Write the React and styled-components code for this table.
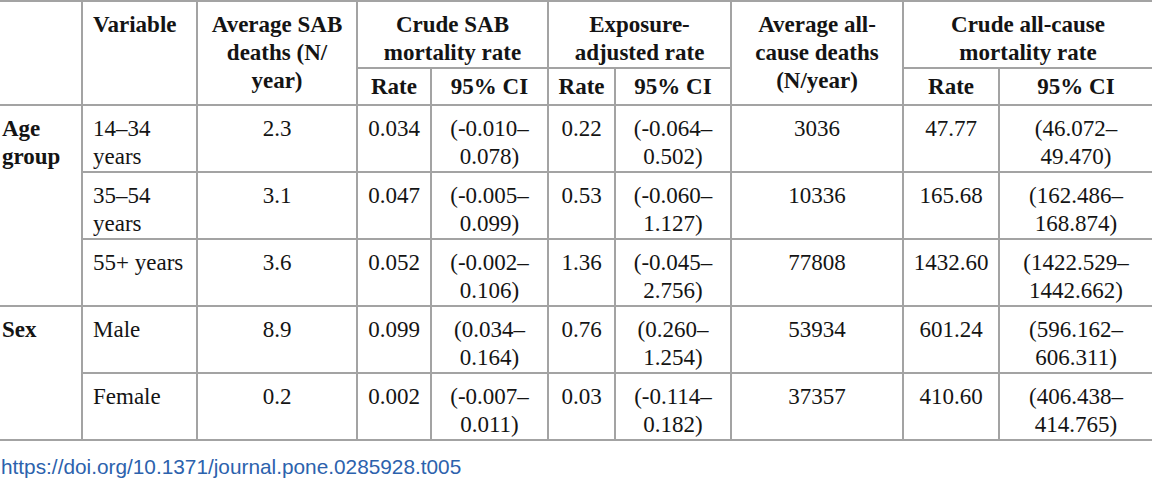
import React from 'react';
import styled, { createGlobalStyle } from 'styled-components';

const GlobalStyle = createGlobalStyle`
  body {
    margin: 0;
    background: #fff;
  }
`;

const rows = [
  {
    group: ['Age', 'group'],
    span: 3,
    variable: ['14–34', 'years'],
    deaths: '2.3',
    sabRate: '0.034',
    sabCi: ['(-0.010–', '0.078)'],
    expRate: '0.22',
    expCi: ['(-0.064–', '0.502)'],
    allDeaths: '3036',
    allRate: '47.77',
    allCi: ['(46.072–', '49.470)'],
  },
  {
    variable: ['35–54', 'years'],
    deaths: '3.1',
    sabRate: '0.047',
    sabCi: ['(-0.005–', '0.099)'],
    expRate: '0.53',
    expCi: ['(-0.060–', '1.127)'],
    allDeaths: '10336',
    allRate: '165.68',
    allCi: ['(162.486–', '168.874)'],
  },
  {
    variable: ['55+ years'],
    deaths: '3.6',
    sabRate: '0.052',
    sabCi: ['(-0.002–', '0.106)'],
    expRate: '1.36',
    expCi: ['(-0.045–', '2.756)'],
    allDeaths: '77808',
    allRate: '1432.60',
    allCi: ['(1422.529–', '1442.662)'],
  },
  {
    group: ['Sex'],
    span: 2,
    variable: ['Male'],
    deaths: '8.9',
    sabRate: '0.099',
    sabCi: ['(0.034–', '0.164)'],
    expRate: '0.76',
    expCi: ['(0.260–', '1.254)'],
    allDeaths: '53934',
    allRate: '601.24',
    allCi: ['(596.162–', '606.311)'],
  },
  {
    variable: ['Female'],
    deaths: '0.2',
    sabRate: '0.002',
    sabCi: ['(-0.007–', '0.011)'],
    expRate: '0.03',
    expCi: ['(-0.114–', '0.182)'],
    allDeaths: '37357',
    allRate: '410.60',
    allCi: ['(406.438–', '414.765)'],
  },
];

const widths = [83, 115, 160, 74, 117, 67, 116, 172, 96, 152];

const Lines = ({ parts }) =>
  parts.map((p, i) => (
    <React.Fragment key={i}>
      {i > 0 && <br />}
      {p}
    </React.Fragment>
  ));

const App = () => {
  return (
    <>
      <GlobalStyle />
      <Page>
        <Table>
          <colgroup>
            {widths.map((w, i) => (
              <col key={i} style={{ width: w }} />
            ))}
          </colgroup>
          <thead>
            <tr>
              <Head rowSpan={2} first />
              <Head rowSpan={2} left>Variable</Head>
              <Head rowSpan={2}>
                Average SAB
                <br />
                deaths (N/
                <br />
                year)
              </Head>
              <Head colSpan={2}>
                Crude SAB
                <br />
                mortality rate
              </Head>
              <Head colSpan={2}>
                Exposure-
                <br />
                adjusted rate
              </Head>
              <Head rowSpan={2}>
                Average all-
                <br />
                cause deaths
                <br />
                (N/year)
              </Head>
              <Head colSpan={2} last>
                Crude all-cause
                <br />
                mortality rate
              </Head>
            </tr>
            <tr>
              <SubHead>Rate</SubHead>
              <SubHead>95% CI</SubHead>
              <SubHead>Rate</SubHead>
              <SubHead>95% CI</SubHead>
              <SubHead>Rate</SubHead>
              <SubHead last>95% CI</SubHead>
            </tr>
          </thead>
          <tbody>
            {rows.map((r, i) => (
              <tr key={i}>
                {r.group && (
                  <GroupCell rowSpan={r.span}>
                    <Lines parts={r.group} />
                  </GroupCell>
                )}
                <Cell left>
                  <Lines parts={r.variable} />
                </Cell>
                <Cell>{r.deaths}</Cell>
                <Cell>{r.sabRate}</Cell>
                <Cell>
                  <Lines parts={r.sabCi} />
                </Cell>
                <Cell>{r.expRate}</Cell>
                <Cell>
                  <Lines parts={r.expCi} />
                </Cell>
                <Cell>{r.allDeaths}</Cell>
                <Cell>{r.allRate}</Cell>
                <Cell last>
                  <Lines parts={r.allCi} />
                </Cell>
              </tr>
            ))}
          </tbody>
        </Table>
        <DoiLink href="#">https://doi.org/10.1371/journal.pone.0285928.t005</DoiLink>
      </Page>
    </>
  );
};

export default App;

const Page = styled.div`
  width: 1152px;
  height: 486px;
  overflow: hidden;
  background: #fff;
  display: flex;
  flex-direction: column;
`;

const Table = styled.table`
  width: 1152px;
  table-layout: fixed;
  border-collapse: separate;
  border-spacing: 0;
  border-top: 2px solid #a3a3a3;
  font-family: 'Liberation Serif', 'Times New Roman', serif;
  font-size: 23px;
  line-height: 28px;
  color: #141414;

  th,
  td {
    box-sizing: border-box;
    vertical-align: top;
    border-bottom: 2px solid #a3a3a3;
  }
`;

const Head = styled.th`
  font-weight: 700;
  text-align: ${(p) => (p.left ? 'left' : 'center')};
  padding: 9px 4px 0 ${(p) => (p.first ? '2px' : p.left ? '10px' : '4px')};
  border-right: ${(p) => (p.last ? 'none' : '2px solid #a3a3a3')};
`;

const SubHead = styled.th`
  font-weight: 700;
  text-align: center;
  padding: 4px 4px 3px;
  border-right: ${(p) => (p.last ? 'none' : '2px solid #a3a3a3')};
`;

const GroupCell = styled.td`
  font-weight: 700;
  text-align: left;
  padding: 9px 4px 0 2px;
  border-right: 2px solid #a3a3a3;
`;

const Cell = styled.td`
  font-weight: 400;
  text-align: ${(p) => (p.left ? 'left' : 'center')};
  padding: 9px 4px 0 ${(p) => (p.left ? '10px' : '4px')};
  border-right: ${(p) => (p.last ? 'none' : '2px solid #a3a3a3')};
`;

const DoiLink = styled.a`
  margin-top: 14px;
  padding-left: 1px;
  font-family: 'Liberation Sans', Arial, sans-serif;
  font-size: 20.8px;
  line-height: 24px;
  color: #2c62ad;
  text-decoration: none;
  align-self: flex-start;
`;
